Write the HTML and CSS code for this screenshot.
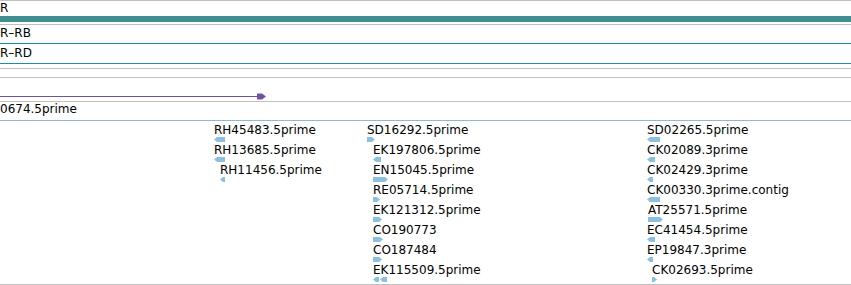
FILE: index.html
```html
<!DOCTYPE html>
<html lang="en">
  <head>
    <meta charset="UTF-8" />
    <title>Track view</title>
    <link rel="stylesheet" href="styles.css">
  </head>
  <body>
    <div class="view">
      <!-- Gene tracks (names cut at the left edge) -->
      <div class="rule"></div>
      <div class="label first">R</div>
      <div class="bar"></div>
      <div class="rule gap-2"></div>
      <div class="label rb">R–RB</div>
      <div class="rule blue"></div>
      <div class="label rd">R–RD</div>
      <div class="rule blue"></div>
      <div class="rule gap-4"></div>
      <div class="rule gap-8"></div>

      <!-- Transcript arrow -->
      <div class="arrow-row">
        <svg width="270" height="23" viewBox="0 0 270 23">
          <line x1="0" y1="18.5" x2="258" y2="18.5" stroke="#6f52a6" stroke-width="1" />
          <polygon points="257,15.5 262,15.5 266,18.5 262,21.5 257,21.5" fill="#6f52a6" />
        </svg>
      </div>
      <div class="rule"></div>
      <div class="label est">0674.5prime</div>

      <!-- EST features -->
      <div class="features">
        <div class="col col-1">
          <div class="feature">
            <div class="name">RH45483.5prime</div>
            <svg class="glyph" width="11" height="5"><polygon points="0,2.5 3,0 11,0 11,5 3,5" /></svg>
          </div>
          <div class="feature">
            <div class="name">RH13685.5prime</div>
            <svg class="glyph" width="11" height="5"><polygon points="0,2.5 3,0 11,0 11,5 3,5" /></svg>
          </div>
          <div class="feature" style="padding-left: 6px">
            <div class="name">RH11456.5prime</div>
            <svg class="glyph" width="5" height="5"><polygon points="0,2.5 3,0 5,0 5,5 3,5" /></svg>
          </div>
        </div>

        <div class="col col-2">
          <div class="feature">
            <div class="name">SD16292.5prime</div>
            <svg class="glyph" width="8" height="5"><polygon points="0,0 5,0 8,2.5 5,5 0,5" /></svg>
          </div>
          <div class="feature" style="padding-left: 6px">
            <div class="name">EK197806.5prime</div>
            <svg class="glyph" width="8" height="5"><polygon points="0,2.5 3,0 8,0 8,5 3,5" /></svg>
          </div>
          <div class="feature" style="padding-left: 6px">
            <div class="name">EN15045.5prime</div>
            <svg class="glyph" width="15" height="5"><polygon points="0,0 12,0 15,2.5 12,5 0,5" /></svg>
          </div>
          <div class="feature" style="padding-left: 6px">
            <div class="name">RE05714.5prime</div>
            <svg class="glyph" width="7" height="5"><polygon points="0,0 4,0 7,2.5 4,5 0,5" /></svg>
          </div>
          <div class="feature" style="padding-left: 6px">
            <div class="name">EK121312.5prime</div>
            <svg class="glyph" width="9" height="5"><polygon points="0,0 6,0 9,2.5 6,5 0,5" /></svg>
          </div>
          <div class="feature" style="padding-left: 6px">
            <div class="name">CO190773</div>
            <svg class="glyph" width="10" height="5"><polygon points="0,0 7,0 10,2.5 7,5 0,5" /></svg>
          </div>
          <div class="feature" style="padding-left: 6px">
            <div class="name">CO187484</div>
            <svg class="glyph" width="9" height="5"><polygon points="0,0 6,0 9,2.5 6,5 0,5" /></svg>
          </div>
          <div class="feature" style="padding-left: 6px">
            <div class="name">EK115509.5prime</div>
            <svg class="glyph" width="14" height="5">
              <polygon points="0,2.5 3,0 6,0 6,5 3,5" />
              <polygon points="7,2.5 10,0 14,0 14,5 10,5" />
            </svg>
          </div>
        </div>

        <div class="col col-3">
          <div class="feature">
            <div class="name">SD02265.5prime</div>
            <svg class="glyph" width="13" height="5"><polygon points="0,2.5 3,0 13,0 13,5 3,5" /></svg>
          </div>
          <div class="feature">
            <div class="name">CK02089.3prime</div>
            <svg class="glyph" width="8" height="5"><polygon points="0,2.5 3,0 8,0 8,5 3,5" /></svg>
          </div>
          <div class="feature">
            <div class="name">CK02429.3prime</div>
            <svg class="glyph" width="6" height="5"><polygon points="0,2.5 3,0 6,0 6,5 3,5" /></svg>
          </div>
          <div class="feature">
            <div class="name">CK00330.3prime.contig</div>
            <svg class="glyph" width="13" height="5"><polygon points="0,2.5 3,0 13,0 13,5 3,5" /></svg>
          </div>
          <div class="feature" style="padding-left: 1px">
            <div class="name">AT25571.5prime</div>
            <svg class="glyph" width="15" height="5"><polygon points="0,0 12,0 15,2.5 12,5 0,5" /></svg>
          </div>
          <div class="feature">
            <div class="name">EC41454.5prime</div>
            <svg class="glyph" width="8" height="5"><polygon points="0,2.5 3,0 8,0 8,5 3,5" /></svg>
          </div>
          <div class="feature">
            <div class="name">EP19847.3prime</div>
            <svg class="glyph" width="6" height="5"><polygon points="0,2.5 3,0 6,0 6,5 3,5" /></svg>
          </div>
          <div class="feature" style="padding-left: 5px">
            <div class="name">CK02693.5prime</div>
            <svg class="glyph" width="5" height="5"><polygon points="0,0 2,0 5,2.5 2,5 0,5" /></svg>
          </div>
        </div>
      </div>
      <div class="rule"></div>
    </div>
  </body>
</html>
```

FILE: styles.css
```css
/* Page */
html,
body {
  margin: 0;
  background-color: #fff;
}
.view {
  width: 851px;
  height: 285px;
  overflow: hidden;
  font-family: "DejaVu Sans", sans-serif;
  font-size: 12px;
  color: #000;
}
/* Track separators */
.rule {
  height: 1px;
  background-color: #c0c0c0;
}
.rule.blue {
  background-color: #1f8cae;
}
.gap-2 {
  margin-top: 2px;
}
.gap-4 {
  margin-top: 4px;
}
.gap-8 {
  margin-top: 8px;
}
/* Track labels */
.label {
  line-height: 14px;
  white-space: nowrap;
}
.label.first {
  height: 15px;
}
.label.rb {
  height: 17px;
  padding-top: 1px;
}
.label.rd {
  height: 17px;
  padding-top: 2px;
}
.label.est {
  height: 18px;
  border-bottom: 1px solid #8db9d9;
}
/* Gene bar */
.bar {
  height: 6px;
  background-color: #3f8f91;
}
/* Transcript arrow */
.arrow-row {
  height: 23px;
}
.arrow-row svg {
  display: block;
}
/* Feature columns */
.features {
  display: flex;
  height: 161px;
  padding-top: 2px;
  padding-left: 214px;
}
.col {
  display: flex;
  flex-direction: column;
}
.col-1 {
  width: 153px;
}
.col-2 {
  width: 280px;
}
.feature {
  height: 20px;
}
.name {
  line-height: 14px;
  white-space: nowrap;
}
.glyph {
  display: block;
  fill: #8ac0e0;
}
```
